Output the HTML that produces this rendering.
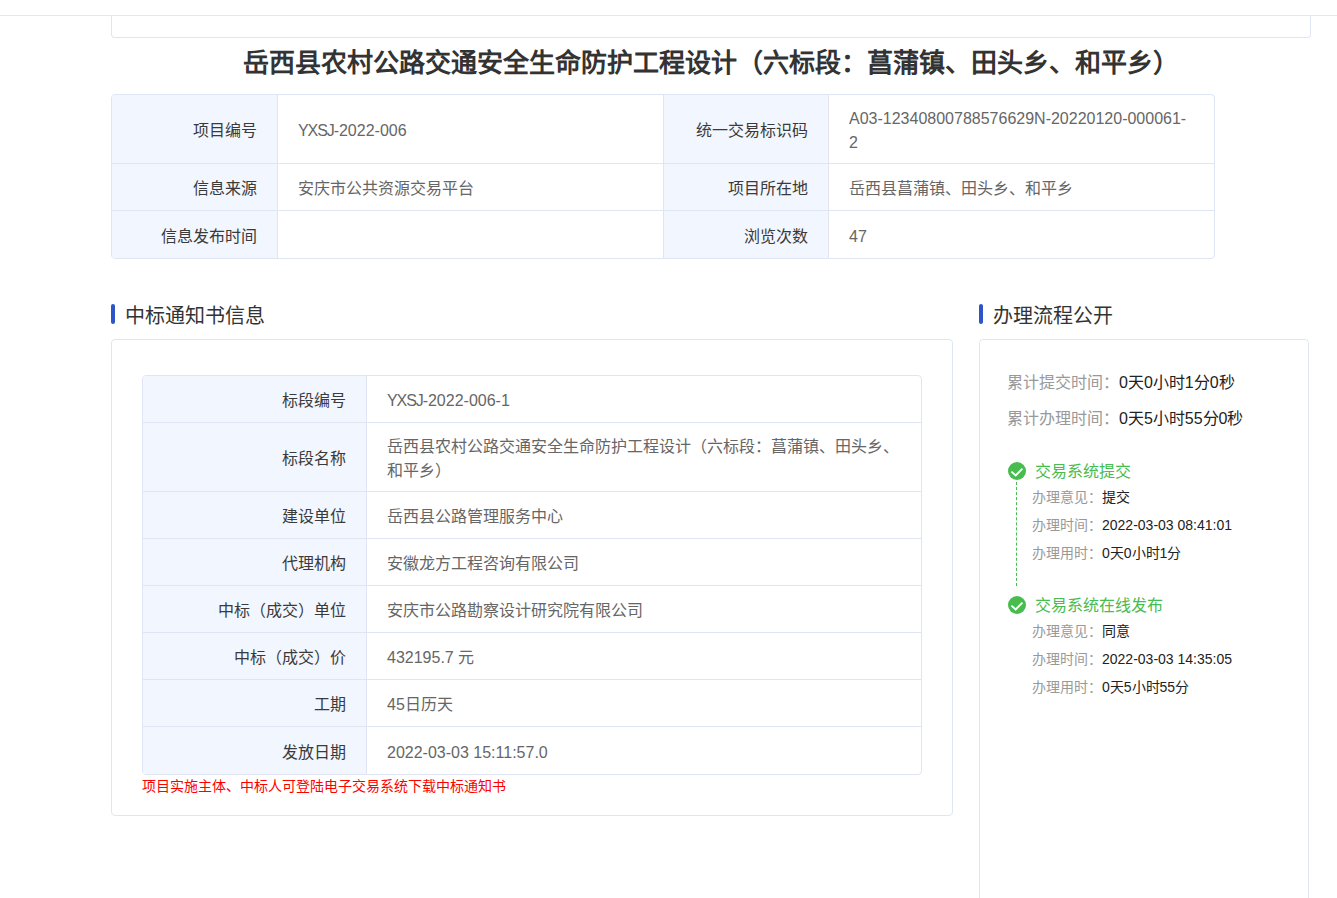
<!DOCTYPE html>
<html lang="zh-CN">
<head>
<meta charset="utf-8">
<style>
*{margin:0;padding:0;box-sizing:border-box;}
html,body{width:1337px;height:898px;overflow:hidden;background:#fff;}
body{font-family:"Liberation Sans",sans-serif;color:#333;position:relative;}
.topline{position:absolute;left:0;top:15px;width:1337px;height:1px;background:#e6e8ee;}
.topbox{position:absolute;left:111px;top:15px;width:1200px;height:23px;border:1px solid #e0e5f3;border-top:none;border-radius:0 0 4px 4px;}
.title{position:absolute;left:111px;width:1200px;top:45px;height:36px;line-height:36px;text-align:center;font-size:26px;font-weight:bold;color:#333;}
table{border-collapse:separate;border-spacing:0;}
.t1{position:absolute;left:111px;top:94px;width:1104px;border:1px solid #e0e5f3;border-radius:4px;overflow:hidden;}
.t1 td{font-size:16px;line-height:24px;border-top:1px solid #e0e5f3;border-left:1px solid #e0e5f3;color:#666;}
.t1 tr:first-child td{border-top:none;}
.t1 td:first-child{border-left:none;}
.t1 td.l{background:#f2f6fe;text-align:right;padding:4px 20px 0 0;color:#3a3a3a;}
.t1 td.v{padding:4px 20px 0;}
.sec{position:absolute;font-size:20px;line-height:28px;color:#333;padding-left:14px;}
.sec:before{content:"";position:absolute;left:0;top:2px;width:4px;height:20px;background:#2c55c8;border-radius:2px;}
.box{position:absolute;border:1px solid #e0e5f3;border-radius:4px;}
.t2{position:absolute;left:142px;top:375px;width:780px;border:1px solid #e0e5f3;border-radius:4px;overflow:hidden;}
.t2 td{font-size:16px;line-height:24px;border-top:1px solid #e0e5f3;border-left:1px solid #e0e5f3;color:#666;}
.t2 tr:first-child td{border-top:none;}
.t2 td:first-child{border-left:none;}
.t2 td.l{background:#f2f6fe;text-align:right;padding:4px 20px 0 0;color:#3a3a3a;width:223px;}
.t2 td.v{padding:4px 20px 0;}
.ls{letter-spacing:-1.1px;}
.note{position:absolute;left:142px;top:776px;font-size:14px;line-height:20px;color:#f00;}
.stat{position:absolute;left:1007px;font-size:16px;line-height:24px;color:#999;}
.stat b{font-weight:normal;color:#222;}
.step{position:absolute;left:1007px;}
.step .ic{position:absolute;left:1px;top:0;width:18px;height:18px;}
.step .tt{position:absolute;left:28px;top:-2px;font-size:16px;line-height:24px;color:#48bc4e;white-space:nowrap;}
.sub{position:absolute;left:1032px;font-size:14px;line-height:20px;color:#999;white-space:nowrap;}
.sub b{font-weight:normal;color:#222;}
.dash{position:absolute;left:1016px;width:1px;border-left:1px dashed #48bc4e;}
</style>
</head>
<body>
<div class="topline"></div>
<div class="topbox"></div>
<div class="title">岳西县农村公路交通安全生命防护工程设计（六标段：菖蒲镇、田头乡、和平乡）</div>

<table class="t1">
<tr style="height:68px"><td class="l" style="width:165px">项目编号</td><td class="v" style="width:386px"><span class="ls">YXSJ</span>-2022-006</td><td class="l" style="width:165px">统一交易标识码</td><td class="v">A03-12340800788576629N-20220120-000061-2</td></tr>
<tr style="height:47px"><td class="l">信息来源</td><td class="v">安庆市公共资源交易平台</td><td class="l">项目所在地</td><td class="v">岳西县菖蒲镇、田头乡、和平乡</td></tr>
<tr style="height:48px"><td class="l">信息发布时间</td><td class="v"></td><td class="l">浏览次数</td><td class="v">47</td></tr>
</table>

<div class="sec" style="left:111px;top:302px;">中标通知书信息</div>
<div class="box" style="left:111px;top:339px;width:842px;height:477px;"></div>
<table class="t2">
<tr style="height:46px"><td class="l">标段编号</td><td class="v"><span class="ls">YXSJ</span>-2022-006-1</td></tr>
<tr style="height:69px"><td class="l">标段名称</td><td class="v">岳西县农村公路交通安全生命防护工程设计（六标段：菖蒲镇、田头乡、和平乡）</td></tr>
<tr style="height:47px"><td class="l">建设单位</td><td class="v">岳西县公路管理服务中心</td></tr>
<tr style="height:47px"><td class="l">代理机构</td><td class="v">安徽龙方工程咨询有限公司</td></tr>
<tr style="height:47px"><td class="l">中标（成交）单位</td><td class="v">安庆市公路勘察设计研究院有限公司</td></tr>
<tr style="height:47px"><td class="l">中标（成交）价</td><td class="v">432195.7 元</td></tr>
<tr style="height:47px"><td class="l">工期</td><td class="v">45日历天</td></tr>
<tr style="height:48px"><td class="l">发放日期</td><td class="v">2022-03-03 15:11:57.0</td></tr>
</table>
<div class="note">项目实施主体、中标人可登陆电子交易系统下载中标通知书</div>

<div class="sec" style="left:979px;top:302px;">办理流程公开</div>
<div class="box" style="left:979px;top:339px;width:330px;height:600px;"></div>
<div class="stat" style="top:371px;">累计提交时间：<b>0天0小时1分0秒</b></div>
<div class="stat" style="top:407px;">累计办理时间：<b>0天5小时55分0秒</b></div>

<div class="dash" style="top:482px;height:104px;"></div>
<div class="step" style="top:462px;">
<svg class="ic" viewBox="0 0 18 18"><circle cx="9" cy="9" r="9" fill="#48bc4e"/><path d="M3.4 9.6L7.7 13.4L14.4 6.6" fill="none" stroke="#fff" stroke-width="1.9" stroke-linecap="butt" stroke-linejoin="miter"/></svg>
<div class="tt">交易系统提交</div>
</div>
<div class="sub" style="top:487px;">办理意见：<b>提交</b></div>
<div class="sub" style="top:515px;">办理时间：<b>2022-03-03 08:41:01</b></div>
<div class="sub" style="top:543px;">办理用时：<b>0天0小时1分</b></div>

<div class="step" style="top:596px;">
<svg class="ic" viewBox="0 0 18 18"><circle cx="9" cy="9" r="9" fill="#48bc4e"/><path d="M3.4 9.6L7.7 13.4L14.4 6.6" fill="none" stroke="#fff" stroke-width="1.9" stroke-linecap="butt" stroke-linejoin="miter"/></svg>
<div class="tt">交易系统在线发布</div>
</div>
<div class="sub" style="top:621px;">办理意见：<b>同意</b></div>
<div class="sub" style="top:649px;">办理时间：<b>2022-03-03 14:35:05</b></div>
<div class="sub" style="top:677px;">办理用时：<b>0天5小时55分</b></div>
</body>
</html>
